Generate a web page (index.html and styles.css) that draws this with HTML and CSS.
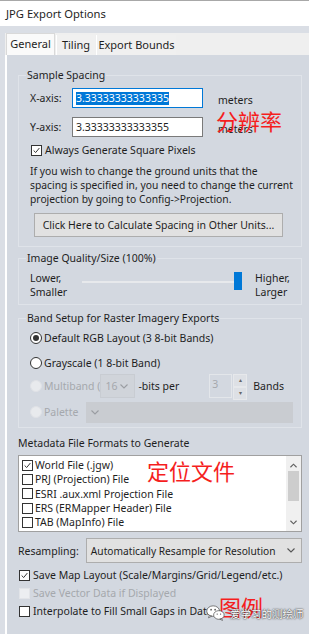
FILE: index.html
```html
<!DOCTYPE html>
<html lang="en">

<head>
    <meta charset="UTF-8">
    <meta name="viewport" content="width=device-width, initial-scale=1.0">
    <title>JPG Export Options</title>
    <link rel="stylesheet" href="styles.css">
</head>

<body>
    <div class="window">
        <div class="titlebar">JPG Export Options</div>
        <div class="frame">
            <div class="tabs">
                <span class="tab active">General</span>
                <span class="tab">Tiling</span>
                <span class="tab">Export Bounds</span>
            </div>

            <div class="page">
                <fieldset class="group spacing">
                    <legend>Sample Spacing</legend>
                    <div class="group-body">
                        <div class="field-row">
                            <span class="field-label">X-axis:</span>
                            <span class="textbox focused"><span class="sel">3.33333333333335</span></span>
                            <span class="unit">meters</span>
                        </div>
                        <div class="field-row second">
                            <span class="field-label">Y-axis:</span>
                            <span class="textbox">3.33333333333355</span>
                            <span class="unit">meters</span>
                        </div>
                        <label class="check-row square">
                            <span class="cb"><svg viewBox="0 0 11 11"><polyline points="2,5.5 4.5,8 9,2.5" /></svg></span>
                            Always Generate Square Pixels
                        </label>
                        <p class="note">If you wish to change the ground units that the<br>spacing is specified in, you need to change the current<br>projection by going to Config-&gt;Projection.</p>
                        <button class="btn">Click Here to Calculate Spacing in Other Units...</button>
                    </div>
                    <span class="mark mark-res">分辨率</span>
                </fieldset>

                <fieldset class="group quality">
                    <legend>Image Quality/Size (100%)</legend>
                    <div class="group-body slider-row">
                        <span class="slider-end">Lower,<br>Smaller</span>
                        <span class="slider">
                            <span class="track"></span>
                            <span class="thumb"></span>
                        </span>
                        <span class="slider-end">Higher,<br>Larger</span>
                    </div>
                </fieldset>

                <fieldset class="group bands">
                    <legend>Band Setup for Raster Imagery Exports</legend>
                    <div class="group-body">
                        <div class="radio-row r1"><span class="rb checked"></span>Default RGB Layout (3 8-bit Bands)</div>
                        <div class="radio-row r2"><span class="rb"></span>Grayscale (1 8-bit Band)</div>
                        <div class="radio-row r3 disabled">
                            <span class="rb"></span><span class="dim">Multiband (</span>
                            <span class="combo small">16 <svg class="chev" viewBox="0 0 8 5"><polyline points="0.5,0.5 4,4 7.5,0.5" /></svg></span>
                            <span class="bits">-bits per</span>
                            <span class="spin">
                                <span class="spin-box">3</span>
                                <span class="spin-btns"><span>&#9652;</span><span>&#9662;</span></span>
                            </span>
                            <span class="bits">Bands</span>
                        </div>
                        <div class="radio-row r4 disabled">
                            <span class="rb"></span><span class="dim">Palette</span>
                            <span class="combo wide"><svg class="chev" viewBox="0 0 8 5"><polyline points="0.5,0.5 4,4 7.5,0.5" /></svg></span>
                        </div>
                    </div>
                </fieldset>

                <div class="section-label">Metadata File Formats to Generate</div>
                <div class="listbox">
                    <div class="items">
                        <div class="item"><span class="cb"><svg viewBox="0 0 11 11"><polyline points="2,5.5 4.5,8 9,2.5" /></svg></span>World File (.jgw)</div>
                        <div class="item"><span class="cb"></span>PRJ (Projection) File</div>
                        <div class="item"><span class="cb"></span>ESRI .aux.xml Projection File</div>
                        <div class="item"><span class="cb"></span>ERS (ERMapper Header) File</div>
                        <div class="item"><span class="cb"></span>TAB (MapInfo) File</div>
                        <div class="item"><span class="cb"></span>MAP (OziExplorer) File</div>
                    </div>
                    <div class="scrollbar">
                        <svg class="arrow" viewBox="0 0 8 5"><polyline points="0.5,4.5 4,1 7.5,4.5" /></svg>
                        <span class="sb-thumb"></span>
                        <svg class="arrow down" viewBox="0 0 8 5"><polyline points="0.5,0.5 4,4 7.5,0.5" /></svg>
                    </div>
                    <span class="mark mark-meta">定位文件</span>
                </div>

                <div class="resample-row">
                    <span>Resampling:</span>
                    <span class="combo resample"><span>Automatically Resample for Resolution</span> <svg class="chev" viewBox="0 0 8 5"><polyline points="0.5,0.5 4,4 7.5,0.5" /></svg></span>
                </div>

                <div class="options">
                    <div class="check-row"><span class="cb"><svg viewBox="0 0 11 11"><polyline points="2,5.5 4.5,8 9,2.5" /></svg></span>Save Map Layout (Scale/Margins/Grid/Legend/etc.)</div>
                    <div class="check-row disabled"><span class="cb"></span>Save Vector Data if Displayed</div>
                    <div class="check-row"><span class="cb"></span>Interpolate to Fill Small Gaps in Data</div>
                    <span class="mark mark-legend">图例</span>
                </div>

                <div class="watermark">
                    <svg class="wechat" viewBox="0 0 20 17">
                        <ellipse cx="7.5" cy="6.5" rx="6.8" ry="5.6" />
                        <path d="M3.5 11 L2.6 13.6 L6 11.8 Z" />
                        <ellipse cx="13.6" cy="10.6" rx="5.6" ry="4.6" />
                        <path d="M16.5 14.3 L17.4 16.4 L14.6 15 Z" />
                        <circle class="eye" cx="5.3" cy="5" r="0.9" />
                        <circle class="eye" cx="9.6" cy="5" r="0.9" />
                        <circle class="eye" cx="11.8" cy="9.6" r="0.7" />
                        <circle class="eye" cx="15.4" cy="9.6" r="0.7" />
                    </svg>
                    <span>爱学习的测绘师</span>
                </div>
            </div>
        </div>
    </div>
</body>

</html>
```

FILE: styles.css
```css
* {
    margin: 0;
    padding: 0;
    box-sizing: border-box;
}

body {
    width: 309px;
    height: 634px;
    overflow: hidden;
    font-family: "Noto Sans", "Noto Sans CJK SC", sans-serif;
    font-size: 10.5px;
    color: #1e1e1e;
    background-color: #dde0e6;
}

.window {
    height: 634px;
    display: flex;
    flex-direction: column;
}

.titlebar {
    height: 26px;
    line-height: 25px;
    padding-left: 6px;
    font-size: 11.2px;
    background-color: #fff;
    border-top: 1px solid #a8a8a8;
}

.frame {
    flex: 1;
    display: flex;
    flex-direction: column;
    padding-top: 7px;
    padding-left: 5px;
    background-color: #dadee5;
}

/* tab strip */
.tabs {
    height: 22px;
    display: flex;
    align-items: flex-end;
    gap: 1px;
    padding-left: 1px;
    background-color: #efefef;
}

.tab {
    height: 20px;
    line-height: 19px;
    font-size: 11px;
    text-align: center;
    white-space: nowrap;
    background-color: #f0f0f0;
    border-left: 1px solid #fff;
}

.tab:nth-child(2) {
    width: 39px;
}

.tab:nth-child(3) {
    width: 80px;
}

.tab.active {
    width: 49px;
    height: 22px;
    line-height: 20px;
    background-color: #fafafa;
    border: 1px solid #d9d9d9;
    border-bottom: none;
}

.page {
    flex: 1;
    position: relative;
    display: flex;
    flex-direction: column;
    padding: 13px 7px 0 11px;
    background-color: #d3d8e0;
    border-left: 2px solid #fff;
}

/* group boxes */
.group {
    position: relative;
    border: 1px solid #dfe3e9;
    min-width: 0;
}

.group legend {
    margin-left: 7px;
    padding: 0 1px;
    line-height: 14px;
}

.group-body {
    padding: 6px 0 9px 11px;
}

.quality {
    margin-top: 4px;
}

.bands {
    margin-top: 6px;
}

.field-row {
    height: 20px;
    display: flex;
    align-items: center;
}

.field-row.second {
    margin-top: 9px;
}

.field-label {
    width: 42px;
}

.textbox {
    width: 131px;
    height: 20px;
    line-height: 18px;
    padding-left: 3px;
    background-color: #fff;
    border: 1px solid #7a7a7a;
}

.textbox.focused {
    border-color: #0078d7;
}

.sel {
    display: inline-block;
    line-height: 13px;
    color: #fff;
    background-color: #0078d7;
}

.unit {
    margin-left: 15px;
    padding-top: 3px;
}

.check-row {
    height: 18px;
    display: flex;
    align-items: center;
    gap: 3px;
}

.check-row.square {
    height: 14px;
    margin-top: 6px;
    padding-left: 1px;
}

.cb {
    width: 11px;
    height: 11px;
    flex: none;
    background-color: #fff;
    border: 1px solid #333;
}

.cb svg {
    display: block;
    width: 9px;
    height: 9px;
}

.cb polyline {
    fill: none;
    stroke: #333;
    stroke-width: 1.2;
}

.disabled .cb {
    background-color: #eceef1;
    border-color: #e2e4e8;
}

.note {
    margin-top: 7px;
    line-height: 14px;
    font-size: 10.3px;
    white-space: nowrap;
}

.btn {
    display: block;
    width: 249px;
    height: 24px;
    margin: 7px 0 0 4px;
    font: inherit;
    color: #1e1e1e;
    background-color: #e1e1e1;
    border: 1px solid #adadad;
}

/* slider */
.slider-row {
    display: flex;
    align-items: flex-start;
    padding-top: 6px;
    padding-bottom: 5px;
    line-height: 14px;
}

.slider-end {
    width: 52px;
    flex: none;
}

.slider {
    position: relative;
    flex: none;
    width: 173px;
    height: 28px;
}

.track {
    position: absolute;
    left: 0;
    right: 17px;
    top: 10px;
    height: 2px;
    background-color: #e7e9ec;
}

.thumb {
    position: absolute;
    left: 152px;
    top: 1px;
    width: 8px;
    height: 18px;
    background-color: #0078d7;
}

/* radios */
.bands .group-body {
    padding: 2px 0 4px 11px;
}

.radio-row {
    height: 22px;
    display: flex;
    align-items: center;
    gap: 2px;
    white-space: nowrap;
}

.radio-row.r2,
.radio-row.r4 {
    margin-top: 3px;
}

.radio-row.r3 {
    height: 24px;
}

.rb {
    width: 12px;
    height: 12px;
    flex: none;
    border-radius: 50%;
    background-color: #fff;
    border: 1px solid #333;
    display: flex;
    align-items: center;
    justify-content: center;
}

.rb.checked::after {
    content: "";
    width: 6px;
    height: 6px;
    border-radius: 50%;
    background-color: #333;
}

.disabled .rb {
    background-color: #e8eaed;
    border-color: #e0e2e6;
}

.dim,
.check-row.disabled {
    color: #a5a8ad;
}

.combo {
    height: 24px;
    display: flex;
    align-items: center;
    justify-content: space-between;
    padding: 0 6px 0 4px;
    border: 1px solid #c8ccd2;
    background-color: #d0d4da;
    color: #a5a8ad;
    white-space: nowrap;
}

.combo.small {
    width: 35px;
    margin-left: -2px;
}

.combo.wide {
    width: 207px;
    height: 21px;
    margin-left: 6px;
    background-color: #c9ccd1;
    border-color: #c9ccd1;
}

.chev {
    width: 8px;
    height: 5px;
    flex: none;
}

.chev polyline,
.arrow polyline {
    fill: none;
    stroke: #9a9da2;
    stroke-width: 1.1;
}

.bits {
    margin-left: 1px;
}

.spin {
    display: flex;
    margin-left: 28px;
    margin-right: 3px;
    height: 24px;
}

.spin-box {
    width: 23px;
    padding-left: 2px;
    line-height: 18px;
    color: #a5a8ad;
    border: 1px solid #e3e6ea;
}

.spin-btns {
    width: 14px;
    display: flex;
    flex-direction: column;
    margin-left: 1px;
    font-size: 6px;
    color: #666;
    text-align: center;
}

.spin-btns span {
    flex: 1;
    line-height: 11px;
    background-color: #dde0e5;
    border: 1px solid #e6e8eb;
}

/* metadata list */
.section-label {
    margin-top: 8px;
    line-height: 14px;
}

.listbox {
    position: relative;
    height: 77px;
    margin-top: 5px;
    display: flex;
    background-color: #fff;
    border: 1px solid #a0a0a0;
    overflow: hidden;
}

.items {
    flex: 1;
    padding: 2px 0 0 3px;
}

.item {
    height: 14.3px;
    display: flex;
    align-items: center;
    gap: 2px;
    white-space: nowrap;
}

.scrollbar {
    width: 15px;
    display: flex;
    flex-direction: column;
    align-items: center;
    background-color: #f0f0f0;
}

.arrow {
    width: 7px;
    height: 5px;
    margin-top: 7px;
}

.arrow polyline {
    stroke: #606060;
    stroke-width: 1.3;
}

.arrow.down {
    margin-top: auto;
    margin-bottom: 6px;
}

.sb-thumb {
    width: 11px;
    height: 30px;
    margin-top: 3px;
    background-color: #cdcdcd;
}

/* resampling */
.resample-row {
    margin-top: 6px;
    display: flex;
    align-items: center;
    gap: 7px;
}

.combo.resample {
    flex: 1;
    min-width: 0;
    height: 25px;
    padding: 0 6px 0 4px;
    font-size: 10.2px;
    color: #1e1e1e;
    background-color: #e1e1e1;
    border-color: #adadad;
}

.combo.resample .chev polyline {
    stroke: #555;
}

.options {
    position: relative;
    margin-top: 3px;
    padding-left: 1px;
}

/* red annotations and watermark */
.mark {
    position: absolute;
    font-family: "Noto Sans CJK SC", sans-serif;
    font-size: 22px;
    line-height: 20px;
    color: #f51e1e;
    white-space: nowrap;
}

.mark-res {
    left: 197px;
    top: 28px;
}

.mark-meta {
    left: 128px;
    top: 4px;
}

.mark-legend {
    left: 201px;
    top: 30px;
}

.watermark {
    position: absolute;
    left: 199px;
    top: 550px;
    display: flex;
    align-items: center;
    gap: 5px;
    font-family: "Noto Sans CJK SC", sans-serif;
    font-size: 10.5px;
    color: #fff;
    text-shadow: 0 0 2px #333, 0 0 1px #333;
}

.wechat {
    width: 19px;
    height: 16px;
}

.wechat ellipse,
.wechat path {
    fill: #fff;
    stroke: #555;
    stroke-width: 0.8;
}

.wechat .eye {
    fill: #555;
}
```
